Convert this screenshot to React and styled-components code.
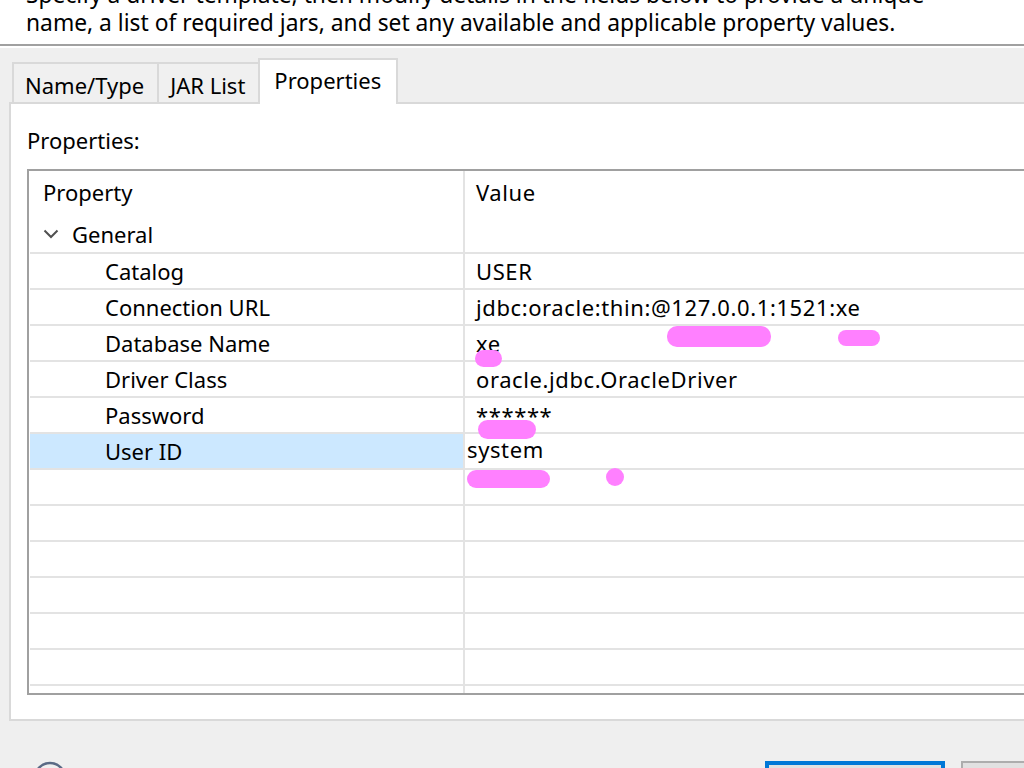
import React from 'react';
import styled, { createGlobalStyle } from 'styled-components';

const GlobalStyle = createGlobalStyle`
  html, body {
    margin: 0;
    padding: 0;
    background: #efefef;
    overflow: hidden;
  }
  body {
    font-family: "Noto Sans", "Open Sans", sans-serif;
    font-size: 22px;
    color: #000;
  }
`;

const rows = [
  { name: 'Catalog', value: 'USER' },
  { name: 'Connection URL', value: 'jdbc:oracle:thin:@127.0.0.1:1521:xe' },
  { name: 'Database Name', value: 'xe' },
  { name: 'Driver Class', value: 'oracle.jdbc.OracleDriver' },
  { name: 'Password', value: '******' },
  { name: 'User ID', value: 'system', selected: true },
];

// redaction marks drawn over the screenshot
const marks = [
  { left: 667, top: 326, width: 104, height: 21 },
  { left: 838, top: 330, width: 42, height: 16 },
  { left: 475, top: 350, width: 27, height: 17 },
  { left: 478, top: 420, width: 58, height: 19 },
  { left: 467, top: 470, width: 83, height: 18 },
  { left: 606, top: 468, width: 18, height: 18 },
];

const App = () => {
  return (
    <>
      <GlobalStyle />
      <Page>
        <Intro>
          <IntroText>
            Specify a driver template, then modify details in the fields below to provide a unique
            <br />
            name, a list of required jars, and set any available and applicable property values.
          </IntroText>
        </Intro>
        <Rule />
        <Body>
          <TabBar>
            <Tab>Name/Type</Tab>
            <Tab>JAR List</Tab>
            <Tab $active>Properties</Tab>
          </TabBar>
          <TabPanel>
            <Label>Properties:</Label>
            <Table>
              <HeaderRow>
                <NameCell>Property</NameCell>
                <ValueCell>Value</ValueCell>
              </HeaderRow>
              <Row $first>
                <NameCell>
                  <Chevron viewBox="0 0 16 10">
                    <path d="M1.5 1.5 L8 8 L14.5 1.5" fill="none" stroke="#505050" strokeWidth="2" />
                  </Chevron>
                  General
                </NameCell>
                <ValueCell />
              </Row>
              {rows.map((r) => (
                <Row key={r.name}>
                  <NameCell $indent $selected={r.selected}>{r.name}</NameCell>
                  <ValueCell $editing={r.selected}>{r.value}</ValueCell>
                </Row>
              ))}
              {Array.from({ length: 7 }).map((_, i) => (
                <Row key={i}>
                  <NameCell />
                  <ValueCell />
                </Row>
              ))}
            </Table>
          </TabPanel>
          <Footer>
            <HelpIcon viewBox="0 0 34 34">
              <circle cx="17" cy="17" r="15" fill="none" stroke="#5a6a85" strokeWidth="2.5" />
              <circle cx="17" cy="17" r="6" fill="none" stroke="#5a6a85" strokeWidth="3" />
            </HelpIcon>
            <Buttons>
              <Button $primary />
              <Button />
            </Buttons>
          </Footer>
        </Body>
        {marks.map((m, i) => (
          <Mark key={i} style={m} />
        ))}
      </Page>
    </>
  );
};
export default App;

const Page = styled.div`
  position: relative;
  width: 1024px;
  height: 768px;
  overflow: hidden;
  display: flex;
  flex-direction: column;
  background: #efefef;
  & > * {
    flex-shrink: 0;
  }
`;

const Intro = styled.div`
  height: 44px;
  background: #fff;
  padding-left: 26px;
  overflow: hidden;
  white-space: nowrap;
`;

const IntroText = styled.p`
  margin: -19px 0 0;
  line-height: 28px;
  font-size: 22.8px;
`;

const Rule = styled.div`
  height: 2px;
  background: #a0a0a0;
  border-bottom: 2px solid #fff;
`;

const Body = styled.div`
  display: flex;
  flex-direction: column;
  padding: 10px 0 0 9px;
  & > * {
    flex-shrink: 0;
  }
`;

const TabBar = styled.div`
  display: flex;
  align-items: flex-end;
  padding-left: 3px;
  height: 46px;
  margin-bottom: -2px;
  position: relative;
  z-index: 1;
`;

const Tab = styled.div`
  box-sizing: border-box;
  height: ${(p) => (p.$active ? '46px' : '42px')};
  padding: ${(p) => (p.$active ? '6px 15px 0 14px' : '7px 13px 0 11px')};
  border: 2px solid #d9d9d9;
  border-bottom: ${(p) => (p.$active ? 'none' : '2px solid #d9d9d9')};
  background: ${(p) => (p.$active ? '#fff' : '#f0f0f0')};
  font-size: 22px;
  line-height: 28px;
  white-space: nowrap;
  & + & {
    margin-left: -2px;
  }
`;

const TabPanel = styled.div`
  box-sizing: border-box;
  width: 1040px;
  height: 619px;
  background: #fff;
  border: 2px solid #d9d9d9;
  padding: 22px 0 0 16px;
`;

const Label = styled.div`
  font-size: 22px;
  line-height: 28px;
  height: 28px;
  margin-bottom: 15px;
`;

const Table = styled.div`
  box-sizing: border-box;
  height: 526px;
  border: 2px solid #a0a0a0;
  border-right: none;
  overflow: hidden;
  display: flex;
  flex-direction: column;
`;

const Row = styled.div`
  display: flex;
  flex-shrink: 0;
  height: ${(p) => (p.$first ? '36px' : '34px')};
  border-top: ${(p) => (p.$first ? 'none' : '2px solid #e3e3e3')};
  margin-left: 1px;
`;

const HeaderRow = styled(Row)`
  height: 45px;
  border-top: none;
  & > * {
    padding-bottom: 3px;
  }
`;

const NameCell = styled.div`
  box-sizing: border-box;
  width: 435px;
  flex-shrink: 0;
  display: flex;
  align-items: center;
  padding-left: ${(p) => (p.$indent ? '75px' : '13px')};
  background: ${(p) => (p.$selected ? '#cce8ff' : 'transparent')};
  border-right: 2px solid #e3e3e3;
  font-size: 22px;
  white-space: nowrap;
`;

const ValueCell = styled.div`
  flex: 1;
  display: flex;
  align-items: center;
  padding-left: ${(p) => (p.$editing ? '2px' : '11px')};
  font-size: 22px;
  letter-spacing: 0.6px;
  white-space: nowrap;
  ${(p) => p.$editing && 'align-items: flex-start; padding-top: 0;'}
`;

const Chevron = styled.svg`
  width: 16px;
  height: 10px;
  margin-right: 13px;
`;

const Footer = styled.div`
  display: flex;
  justify-content: space-between;
  align-items: flex-start;
  padding: 40px 0 0 24px;
`;

const HelpIcon = styled.svg`
  width: 34px;
  height: 34px;
`;

const Buttons = styled.div`
  display: flex;
  gap: 16px;
  margin-right: -117px;
`;

const Button = styled.div`
  box-sizing: border-box;
  width: 180px;
  height: 44px;
  background: #e1e1e1;
  border: 2px solid ${(p) => (p.$primary ? '#0078d7' : '#adadad')};
  box-shadow: ${(p) => (p.$primary ? 'inset 0 0 0 2px #0078d7' : 'none')};
`;

const Mark = styled.div`
  position: absolute;
  background: #ff80ff;
  border-radius: 10px;
`;
